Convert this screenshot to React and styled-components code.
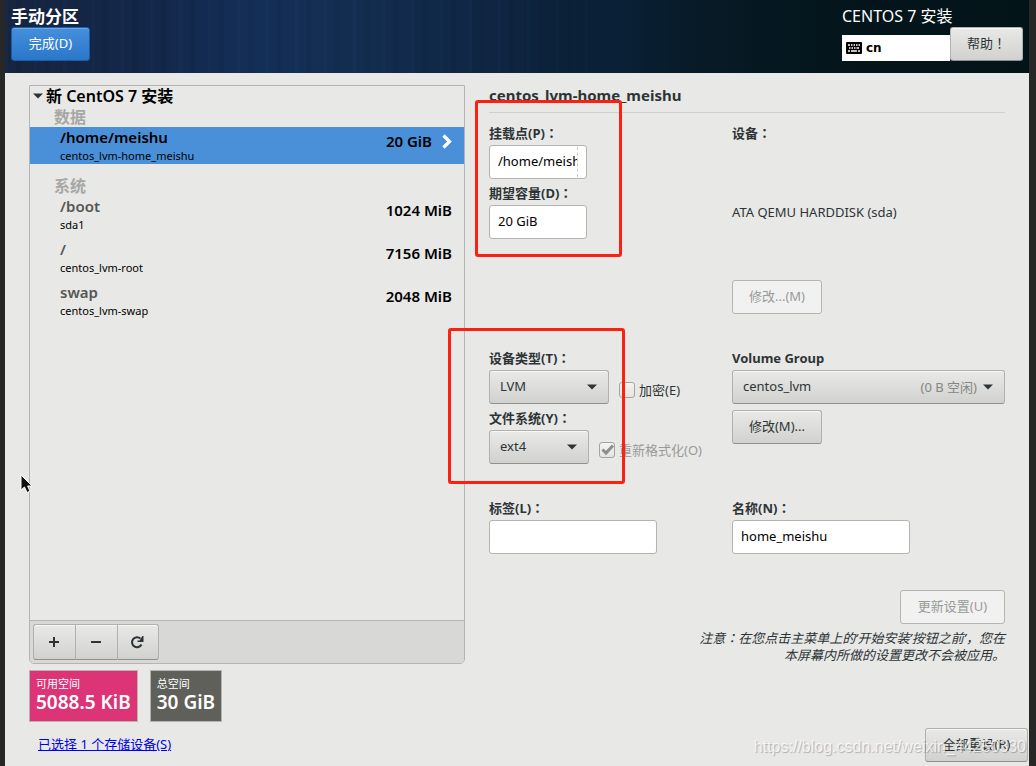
import React from 'react';
import styled, { createGlobalStyle, css } from 'styled-components';

const GlobalStyle = createGlobalStyle`
  *, *::before, *::after { box-sizing: border-box; }
  body {
    margin: 0;
    background: #272727;
    color: #2e3436;
    font: 13px/18px "Noto Sans", "Noto Sans CJK SC", sans-serif;
  }
  button, input, select { font: inherit; color: inherit; margin: 0; }
`;

const Window = styled.div`
  position: relative;
  display: flex;
  flex-direction: column;
  min-height: 100vh;
  margin: 0 7px 0 5px;
  background: #e8e8e6;
  overflow: hidden;
`;

const Header = styled.header`
  display: flex;
  justify-content: space-between;
  height: 73px;
  padding: 6px 6px 0;
  color: #fff;
  background:
    linear-gradient(90deg, transparent 50%, #0a2036 60%, #071b28 67%, #04161c 80%, #021418 100%),
    repeating-linear-gradient(90deg, rgba(70, 120, 180, 0.04) 0 3px, transparent 3px 11px, rgba(0, 0, 0, 0.05) 11px 16px, transparent 16px 29px),
    linear-gradient(90deg, #16253f 0%, #13274a 14%, #142f57 25%, #132d50 35%, #0e243f 50%, #0a2036 60%);
`;

const HeaderSide = styled.div`
  display: flex;
  flex-direction: column;
  align-items: flex-start;
`;

const HeaderTitle = styled.h1`
  margin: 0;
  font-size: ${(p) => (p.$light ? 16 : 17)}px;
  font-weight: ${(p) => (p.$light ? 400 : 700)};
  line-height: 21px;
`;

const HeaderControls = styled.div`
  display: flex;
  align-items: flex-end;
`;

const Layout = styled.button`
  display: flex;
  align-items: center;
  gap: 4px;
  width: 108px;
  height: 26px;
  padding: 0 4px;
  border: 0;
  background: #fff;
  color: #000;
  font: 700 12px/18px "DejaVu Sans", sans-serif;
`;

/* Punctuation centred in its full-width cell */
const Wide = styled.span`
  font-family: "Noto Sans CJK TC", sans-serif;
  line-height: 1;
`;

const raised = css`
  border: 1px solid #b0b0ad;
  border-bottom-color: #8f918d;
  background: linear-gradient(#e9e9e7, #d1d1cf);
  box-shadow: inset 0 1px #f8f8f7;
`;

const Button = styled.button`
  width: ${(p) => p.$width}px;
  height: 34px;
  padding: 0 0 2px;
  border-radius: 3px;
  color: #2e3436;
  white-space: nowrap;
  ${raised}
  ${(p) =>
    p.$primary &&
    css`
      border-color: #1c5daa;
      color: #fff;
      background: linear-gradient(#4590dc, #2a76c9);
      box-shadow: inset 0 1px #6aa8e6;
    `}
  &:disabled {
    border-color: #b5b5b2;
    color: #989a99;
    background: #f1f1f1;
    box-shadow: none;
  }
`;

const ModifyButton = styled(Button)`
  margin-top: 6px;
`;

const Main = styled.main`
  display: grid;
  grid-template-columns: 436fr 516fr;
  column-gap: 24px;
  padding: 12px 24px 0;
`;

const TreePanel = styled.section`
  display: flex;
  flex-direction: column;
  border: 1px solid #b4b5b2;
  border-radius: 0 0 5px 5px;
  color: #000;
`;

const Tree = styled.div`
  flex: 1;
`;

const TreeHead = styled.h2`
  display: flex;
  align-items: center;
  gap: 3px;
  margin: 0 0 2px;
  padding-left: 3px;
  font-size: 16px;
  font-weight: 600;
  line-height: 20px;
`;

const Category = styled.h3`
  margin: ${(p) => (p.$spaced ? 13 : 0)}px 0 0;
  padding-left: 24px;
  color: #a7a7a5;
  font-size: 16px;
  line-height: 19px;
`;

const Items = styled.ul`
  display: flex;
  flex-direction: column;
  gap: 6px;
  margin: 0;
  padding: 0;
  list-style: none;
`;

const Item = styled.li`
  display: flex;
  align-items: center;
  gap: 10px;
  height: 37px;
  padding: 0 12px 0 30px;
  background: ${(p) => (p.$selected ? '#4a90d9' : 'transparent')};
`;

const ItemText = styled.div`
  flex: 1;
  font-size: 11px;
  line-height: 16px;
`;

const ItemName = styled.div`
  margin-bottom: 2px;
  color: ${(p) => (p.$selected ? '#000' : '#555754')};
  font-size: 15px;
  font-weight: 600;
  line-height: 18px;
`;

const ItemEnd = styled.div`
  display: flex;
  align-items: center;
  gap: 10px;
  padding-bottom: 10px;
  font-size: 15px;
  font-weight: 600;
`;

const Toolbar = styled.div`
  display: flex;
  padding: 3px;
  border-top: 1px solid #b4b5b2;
  border-radius: 0 0 4px 4px;
  background: #d8d8d6;
`;

const ToolButton = styled.button`
  display: grid;
  place-items: center;
  width: 42px;
  height: 36px;
  padding: 0 2px 0 0;
  ${raised}
  border-right-width: 0;
  &:first-child { border-radius: 3px 0 0 3px; }
  &:last-child { border-right-width: 1px; border-radius: 0 3px 3px 0; }
`;

const Details = styled.section`
  display: flex;
  flex-direction: column;
`;

const DetailsTitle = styled.h2`
  margin: 0 0 6px;
  padding-bottom: 7px;
  border-bottom: 1px solid #cfcfcd;
  font-size: 15px;
  line-height: 20px;
`;

const Form = styled.form`
  display: grid;
  grid-template-columns: 243fr 273fr;
  row-gap: 30px;
`;

const Column = styled.div`
  display: flex;
  flex-direction: column;
  align-items: flex-start;
`;

const Label = styled.label`
  padding-top: 2px;
  font-weight: 700;
  line-height: 24px;
`;

const Entry = styled.input`
  display: block;
  width: ${(p) => p.$width}px;
  height: 34px;
  padding: 0 8px 2px;
  border: 1px solid #b4b5b2;
  border-radius: 3px;
  background: #fff;
  color: #000;
`;

const EntryWrap = styled.div`
  position: relative;
`;

const ClipMark = styled.span`
  position: absolute;
  top: 2px;
  right: 9px;
  bottom: 2px;
  border-right: 1px dashed #ccc;
`;

const DeviceName = styled.div`
  display: flex;
  align-items: center;
  height: 135px;
  padding-bottom: 2px;
`;

const Row = styled.div`
  display: flex;
  align-items: flex-end;
  gap: 10px;
`;

const SelectWrap = styled.div`
  position: relative;
  width: ${(p) => (p.$width ? `${p.$width}px` : '100%')};
`;

const Select = styled.select`
  display: block;
  width: 100%;
  height: 34px;
  padding: 0 10px 2px;
  border-radius: 3px;
  appearance: none;
  ${raised}
`;

const SelectEnd = styled.span`
  position: absolute;
  top: 0;
  right: 12px;
  display: flex;
  align-items: center;
  gap: 6px;
  height: 34px;
  color: #858785;
  pointer-events: none;
`;

const Check = styled.label`
  display: flex;
  align-items: center;
  gap: 4px;
  line-height: 28px;
  white-space: nowrap;
  color: ${(p) => (p.$disabled ? '#989a99' : 'inherit')};
`;

const CheckBox = styled.span`
  position: relative;
  width: 16px;
  height: 16px;
  svg { position: absolute; top: 0; left: 0; pointer-events: none; }
`;

const CheckInput = styled.input`
  display: block;
  width: 16px;
  height: 16px;
  border: 1px solid #a2a4a1;
  border-radius: 3px;
  appearance: none;
  background: linear-gradient(#f4f4f3, #e4e4e2);
`;

const Apply = styled.div`
  display: flex;
  flex-direction: column;
  align-items: flex-end;
  gap: 6px;
  margin-top: 36px;
`;

const Note = styled.p`
  width: 316px;
  margin: 0;
  font-style: italic;
  line-height: 17px;
  text-align: right;
`;

const Summary = styled.div`
  display: flex;
  gap: 12px;
  padding: 6px 24px 0;
`;

const Space = styled.div`
  height: 52px;
  padding: 4px 6px;
  border: 1px solid #b4b5b2;
  background: ${(p) => p.$color};
  color: #fff;
  font-size: 11px;
  line-height: 17px;
`;

const SpaceValue = styled.div`
  font-size: 19px;
  font-weight: 600;
  line-height: 21px;
`;

const Footer = styled.footer`
  display: flex;
  align-items: center;
  justify-content: space-between;
  padding: 6px 1px 4px 33px;
`;

const StorageLink = styled.a`
  padding-bottom: 2px;
  color: #0000ee;
`;

const Watermark = styled.div`
  position: absolute;
  right: 3px;
  bottom: 9px;
  color: rgba(255, 255, 255, 0.75);
  font: 16px/20px "Liberation Sans", sans-serif;
  text-shadow: 1px 1px 1px rgba(0, 0, 0, 0.25);
  pointer-events: none;
`;

const Highlight = styled.div`
  position: absolute;
  left: ${(p) => p.$x}px;
  top: ${(p) => p.$y}px;
  width: ${(p) => p.$w}px;
  height: ${(p) => p.$h}px;
  border: 3px solid #ff1f10;
  border-radius: 3px;
  pointer-events: none;
`;

const Pointer = styled.svg`
  position: absolute;
  left: 14px;
  top: 474px;
  pointer-events: none;
`;

const Caret = () => (
  <svg width="10" height="6" viewBox="0 0 10 6" aria-hidden="true">
    <path d="M0 .5h10L5 5.5z" fill="#2e3436" />
  </svg>
);

const KeyboardIcon = () => (
  <svg width="16" height="12" viewBox="0 0 16 12" aria-hidden="true">
    <rect width="16" height="12" rx="1" fill="#000" />
    <path
      d="M2 3h2M5 3h1.500M7.500 3H9M10 3h1.500M12.500 3H14M3 6h1.500M5.500 6H7M8 6h1.500M10.500 6h2.500M2 9h2M5 9h6M12 9h2"
      stroke="#fff"
      strokeWidth="1.6"
    />
  </svg>
);

function PartitionItem({ name, device, size, selected }) {
  return (
    <Item $selected={selected}>
      <ItemText>
        <ItemName $selected={selected}>{name}</ItemName>
        {device}
      </ItemText>
      <ItemEnd>
        {size}
        {selected && (
          <svg width="10" height="16" viewBox="0 0 10 16" aria-hidden="true">
            <path d="M1.500 2.500 7.500 8.500 1.500 14.500" fill="none" stroke="#fff" strokeWidth="3.200" />
          </svg>
        )}
      </ItemEnd>
    </Item>
  );
}

function Combo({ id, value, width, hint }) {
  return (
    <SelectWrap $width={width}>
      <Select id={id} defaultValue={value}>
        <option>{value}</option>
      </Select>
      <SelectEnd>
        {hint}
        <Caret />
      </SelectEnd>
    </SelectWrap>
  );
}

function Toggle({ children, disabled, checked }) {
  return (
    <Check $disabled={disabled}>
      <CheckBox>
        <CheckInput type="checkbox" disabled={disabled} defaultChecked={checked} />
        {checked && (
          <svg width="16" height="16" viewBox="0 0 16 16" aria-hidden="true">
            <path d="M3.500 7.500 7 11 14 3.500" fill="none" stroke="#8c8e8c" strokeWidth="3" />
          </svg>
        )}
      </CheckBox>
      {children}
    </Check>
  );
}

function Caption({ children, ...rest }) {
  return (
    <Label {...rest}>
      {children}
      <Wide>：</Wide>
    </Label>
  );
}

export default function App() {
  return (
    <>
      <GlobalStyle />
      <Window>
        <Header>
          <HeaderSide>
            <HeaderTitle>手动分区</HeaderTitle>
            <Button $primary $width={79}>完成(D)</Button>
          </HeaderSide>
          <HeaderSide>
            <HeaderTitle as="div" $light>CENTOS 7 安装</HeaderTitle>
            <HeaderControls>
              <Layout>
                <KeyboardIcon />
                cn
              </Layout>
              <Button $width={73}>帮助<Wide>！</Wide></Button>
            </HeaderControls>
          </HeaderSide>
        </Header>

        <Main>
          <TreePanel>
            <Tree>
              <TreeHead>
                <Caret />
                新 CentOS 7 安装
              </TreeHead>
              <Category>数据</Category>
              <Items>
                <PartitionItem name="/home/meishu" device="centos_lvm-home_meishu" size="20 GiB" selected />
              </Items>
              <Category $spaced>系统</Category>
              <Items>
                <PartitionItem name="/boot" device="sda1" size="1024 MiB" />
                <PartitionItem name="/" device="centos_lvm-root" size="7156 MiB" />
                <PartitionItem name="swap" device="centos_lvm-swap" size="2048 MiB" />
              </Items>
            </Tree>
            <Toolbar>
              <ToolButton aria-label="添加">
                <svg width="12" height="12" viewBox="0 0 12 12">
                  <path d="M6 1v10M1 6h10" stroke="#2e3436" strokeWidth="2" />
                </svg>
              </ToolButton>
              <ToolButton aria-label="删除">
                <svg width="12" height="12" viewBox="0 0 12 12">
                  <path d="M1 6h10" stroke="#2e3436" strokeWidth="2" />
                </svg>
              </ToolButton>
              <ToolButton aria-label="刷新">
                <svg width="14" height="14" viewBox="0 0 14 14">
                  <path d="M11.500 9.500A5 5 0 1 1 10.500 3.600" fill="none" stroke="#2e3436" strokeWidth="2" />
                  <path d="M13.500 1v6h-6V5.500h2.200L12.300 1z" fill="#2e3436" />
                </svg>
              </ToolButton>
            </Toolbar>
          </TreePanel>

          <Details>
            <DetailsTitle>centos_lvm-home_meishu</DetailsTitle>
            <Form>
              <Column>
                <Caption htmlFor="mount">挂载点(P)</Caption>
                <EntryWrap>
                  <Entry id="mount" $width={98} defaultValue="/home/meishu" />
                  <ClipMark />
                </EntryWrap>
                <Caption htmlFor="capacity">期望容量(D)</Caption>
                <Entry id="capacity" $width={98} defaultValue="20 GiB" />
              </Column>
              <Column>
                <Caption as="div">设备</Caption>
                <DeviceName>ATA QEMU HARDDISK (sda)</DeviceName>
                <Button type="button" disabled $width={90}>修改...(M)</Button>
              </Column>

              <Column>
                <Caption htmlFor="type">设备类型(T)</Caption>
                <Row>
                  <Combo id="type" value="LVM" width={120} />
                  <Toggle>加密(E)</Toggle>
                </Row>
                <Caption htmlFor="fs">文件系统(Y)</Caption>
                <Row>
                  <Combo id="fs" value="ext4" width={100} />
                  <Toggle disabled checked>重新格式化(O)</Toggle>
                </Row>
              </Column>
              <Column>
                <Label htmlFor="vg">Volume Group</Label>
                <Combo id="vg" value="centos_lvm" hint="(0 B 空闲)" />
                <ModifyButton type="button" $width={90}>修改(M)...</ModifyButton>
              </Column>

              <Column>
                <Caption htmlFor="label">标签(L)</Caption>
                <Entry id="label" $width={168} />
              </Column>
              <Column>
                <Caption htmlFor="name">名称(N)</Caption>
                <Entry id="name" $width={178} defaultValue="home_meishu" />
              </Column>
            </Form>
            <Apply>
              <Button disabled $width={105}>更新设置(U)</Button>
              <Note>
                注意<Wide>：</Wide>在您点击主菜单上的‘开始安装’按钮之前’，您在本屏幕内所做的设置更改不会被应用。
              </Note>
            </Apply>
          </Details>
        </Main>

        <Summary>
          <Space $color="#dd3377">
            可用空间
            <SpaceValue>5088.5 KiB</SpaceValue>
          </Space>
          <Space $color="#5f6059">
            总空间
            <SpaceValue>30 GiB</SpaceValue>
          </Space>
        </Summary>
        <Footer>
          <StorageLink href="#storage">已选择 1 个存储设备(S)</StorageLink>
          <Button $width={103}>全部重设(R)</Button>
        </Footer>

        <Highlight $x={470} $y={100} $w={147} $h={157} />
        <Highlight $x={443} $y={328} $w={177} $h={156} />
        <Pointer width="14" height="20" viewBox="0 0 14 20" aria-hidden="true">
          <path d="M2 1v15l3.500-3 2.500 5.500 3-1.300L8.600 12H13z" fill="#111" stroke="#fff" />
        </Pointer>
        <Watermark>https://blog.csdn.net/weixin_44250330</Watermark>
      </Window>
    </>
  );
}
